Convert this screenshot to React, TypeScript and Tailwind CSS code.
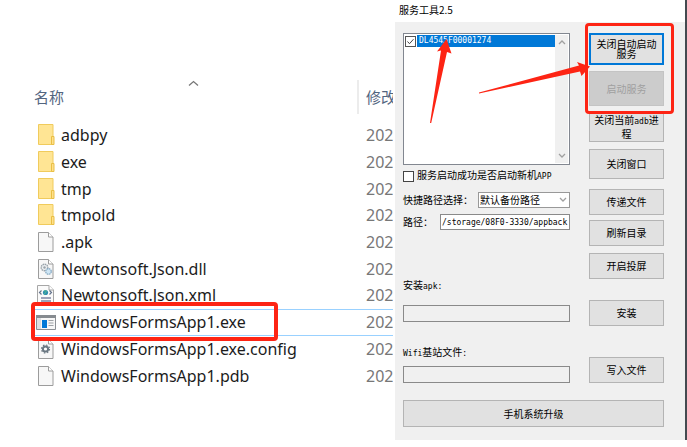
import React from "react";

type IconKind = "folder" | "page" | "dll" | "xml" | "app" | "config";

const files: { name: string; kind: IconKind; selected?: boolean }[] = [
  { name: "adbpy", kind: "folder" },
  { name: "exe", kind: "folder" },
  { name: "tmp", kind: "folder" },
  { name: "tmpold", kind: "folder" },
  { name: ".apk", kind: "page" },
  { name: "Newtonsoft.Json.dll", kind: "dll" },
  { name: "Newtonsoft.Json.xml", kind: "xml" },
  { name: "WindowsFormsApp1.exe", kind: "app", selected: true },
  { name: "WindowsFormsApp1.exe.config", kind: "config" },
  { name: "WindowsFormsApp1.pdb", kind: "page" },
];

function Page({ children }: { children?: React.ReactNode }) {
  return (
    <>
      <path d="M2.5 1.5h10l4.500 4.500v14.500h-14.500z" fill="#f7f7f7" stroke="#9c9c9c" />
      <path d="M12.500 1.500v4.500h4.500" fill="#fff" stroke="#9c9c9c" />
      {children}
    </>
  );
}

function FileIcon({ kind }: { kind: IconKind }) {
  return (
    <svg width="20" height="22" viewBox="0 0 20 22" className="shrink-0" aria-hidden="true">
      {kind === "folder" && (
        <>
          <path d="M2.5 .5h14.500v20h-14.500z" fill="#ffe594" stroke="#f0cb5c" />
          <path d="M15.500 12.500h2.500v8h-2.500z" fill="#ffe08a" stroke="#e9bf45" />
        </>
      )}
      {kind === "page" && <Page />}
      {kind === "dll" && (
        <Page>
          <circle cx="8.5" cy="9.5" r="3.3" fill="#eceff1" stroke="#9aa3aa" strokeWidth="1.4" strokeDasharray="1.6 0.6" />
          <circle cx="8.5" cy="9.5" r="1.2" fill="#9aa3aa" />
          <circle cx="12.500" cy="13.500" r="2.800" fill="#cfe6f5" stroke="#86a9c2" strokeWidth="1.2" strokeDasharray="1.6 0.6" />
        </Page>
      )}
      {kind === "xml" && (
        <>
          <path d="M1.500 1.500h11.500l4.500 4.500v14.500h-16z" fill="#fafafa" stroke="#a6a6a6" />
          <path d="M13 1.500v4.500h4.500" fill="#fff" stroke="#a6a6a6" />
          <path d="M5.500 6.500L3.500 8.500l2 2M13.500 6.500l2 2-2 2" fill="none" stroke="#66748c" strokeWidth="1.200" />
          <circle cx="9.500" cy="8.500" r="2.600" fill="#2e8fb0" />
          <path d="M8 7c2-1 3 .5 1.500 1.500S9 10.500 8.500 10.500" fill="none" stroke="#5dc48b" />
          <path d="M5 14h10M5 17h10" stroke="#7f86a5" strokeWidth="1.300" />
        </>
      )}
      {kind === "app" && (
        <>
          <path d="M.5 4.500h19v14H.5z" fill="#f7f7f7" stroke="#8b8f94" />
          <path d="M0 4h20v3H0z" fill="#868b90" />
          <path d="M1 7h4v11H1z" fill="#dcdfe2" />
          <path d="M6 9h5v8H6z" fill="#0078d7" />
          <path d="M12.500 9.500h5M12.500 12h5M12.500 14.500h5" stroke="#9da1a5" />
        </>
      )}
      {kind === "config" && (
        <Page>
          <circle cx="9.500" cy="11" r="2.600" fill="#fff" stroke="#6b7882" strokeWidth="2" />
          <circle cx="9.500" cy="11" r="4" fill="none" stroke="#6b7882" strokeWidth="1.200" strokeDasharray="1.570 1.570" />
        </Page>
      )}
    </svg>
  );
}

function Chevron({ up = false }: { up?: boolean }) {
  return (
    <svg width="8" height="6" viewBox="0 0 8 6" aria-hidden="true">
      <path d={up ? "M1 5l3-3 3 3" : "M1 1l3 3 3-3"} fill="none" stroke="#a0a0a0" strokeWidth="1.3" />
    </svg>
  );
}

function Mono({ children }: { children: React.ReactNode }) {
  return <span className="font-['DejaVu_Sans_Mono',monospace] text-[8px]">{children}</span>;
}

const raised = "block w-full border border-[#b4b4b4] bg-[#e1e1e1] p-0 text-center";
const field =
  "block border border-[#8a8a8a] px-px font-['DejaVu_Sans_Mono',monospace] text-[8px] text-black outline-none";

function FileList() {
  return (
    <section className="min-w-0 flex-1 overflow-hidden pt-20 pr-0.5 pl-[31px]">
      <div className="relative">
        <table className="h-[309px] w-full table-fixed border-collapse font-['Noto_Sans','Noto_Sans_CJK_SC',sans-serif] text-[16px] leading-5">
          <thead className="text-[15px] text-[#53657f]">
            <tr className="h-[42px]">
              <th className="relative w-[326px] p-0 pb-2 pl-[3px] text-left font-normal">
                <svg className="absolute top-0 left-[157px]" width="11" height="7" viewBox="0 0 11 7" aria-hidden="true">
                  <path d="M1 5.500L5.500 1.500 10 5.500" fill="none" stroke="#777" strokeWidth="1.300" />
                </svg>
                名称
              </th>
              <th className="p-0 pb-2 text-left font-normal">
                <div className="flex h-[34px] items-center overflow-hidden border-l-2 border-[#ececec] pl-[7px] whitespace-nowrap">
                  修改
                </div>
              </th>
            </tr>
          </thead>
          <tbody>
            {files.map((file) => (
              <tr
                key={file.name}
                className={file.selected ? "*:shadow-[inset_0_1px_#99d1ff,inset_0_-1px_#99d1ff]" : ""}
              >
                <td className="p-0 pl-[5px]">
                  <div className="flex items-center gap-[5px] text-[#1c1c1c]">
                    <FileIcon kind={file.kind} />
                    <span className="whitespace-nowrap">{file.name}</span>
                  </div>
                </td>
                <td className="overflow-hidden p-0 pl-[9px] text-[#777]">202</td>
              </tr>
            ))}
          </tbody>
        </table>
        <div className="absolute top-[222px] left-0 h-[39px] w-[247px] rounded border-4 border-[#fd2414]" />
      </div>
    </section>
  );
}

function ServiceTool() {
  return (
    <section className="relative w-[290px] shrink-0 font-['Noto_Sans_CJK_SC',sans-serif] text-[10px] leading-3 text-black">
      <h1 className="h-[22px] pt-1 pl-1">服务工具2.5</h1>
      <div className="bg-[#f0f0f0] pt-[11px] pr-[21px] pb-[13px] pl-2">
        <div className="flex gap-[19px]">
          <div className="min-w-0 flex-1">
            <div className="flex h-[132px] border border-[#828790] bg-white p-px">
              <label className="flex h-3 min-w-0 flex-1 items-center gap-px">
                <span className="relative size-[11px] shrink-0">
                  <input type="checkbox" defaultChecked className="block size-[11px] appearance-none border border-[#555] bg-white" />
                  <svg className="pointer-events-none absolute inset-0" width="11" height="11" viewBox="0 0 11 11" aria-hidden="true">
                    <path d="M2.500 5.500l2 2.200 4-4.500" fill="none" stroke="#444" />
                  </svg>
                </span>
                <span className="flex h-full flex-1 items-center bg-[#0078d7] pl-0.5 text-white">
                  <Mono>DL4545F00001274</Mono>
                </span>
              </label>
              <div className="flex w-[13px] flex-col items-center justify-between bg-[#f0f0f0] py-1">
                <Chevron up />
                <Chevron />
              </div>
            </div>
            <label className="mt-[5px] flex h-3 items-center gap-[3px] whitespace-nowrap">
              <input type="checkbox" className="block size-[11px] shrink-0 appearance-none border border-[#444] bg-white" />
              <span>
                服务启动成功是否启动新机<Mono>APP</Mono>
              </span>
            </label>
            <div className="mt-[10px] flex h-4 items-center justify-between">
              <label htmlFor="quick">快捷路径选择：</label>
              <div className="relative w-[92px] shrink-0">
                <select id="quick" className="block h-4 w-full appearance-none border border-[#999] bg-white p-0 pl-px leading-3">
                  <option>默认备份路径</option>
                </select>
                <span className="pointer-events-none absolute top-[5px] right-[3px]">
                  <Chevron />
                </span>
              </div>
            </div>
            <div className="mt-[6px] flex h-4 items-center justify-between">
              <label htmlFor="path">路径：</label>
              <input id="path" className={`${field} h-4 w-[130px] bg-white`} defaultValue="/storage/08F0-3330/appback" />
            </div>
            <label htmlFor="apk" className="mt-[49px] block h-3">
              安装<Mono>apk:</Mono>
            </label>
            <input id="apk" className={`${field} mt-[14px] h-[17px] w-full`} />
            <label htmlFor="wifi" className="mt-6 block h-3">
              <Mono>Wifi</Mono>基站文件<Mono>:</Mono>
            </label>
            <input id="wifi" className={`${field} mt-2 h-[17px] w-full`} />
          </div>
          <div className="w-[75px] shrink-0">
            <button className="block h-8 w-full border-2 border-[#0078d7] bg-[#e1e1e1] px-1 text-center leading-[10px]">
              关闭自动启动服务
            </button>
            <button disabled className="mt-[6px] block h-[35px] w-full border border-[#c4c4c4] bg-[#cccccc] text-center text-[#a0a0a0]">
              启动服务
            </button>
            <button className={`${raised} mt-[6px] h-[30px]`}>
              关闭当前<Mono>adb</Mono>进
              <br />程
            </button>
            <button className={`${raised} mt-[7px] h-[30px]`}>关闭窗口</button>
            <button className={`${raised} mt-[10px] h-[26px]`}>传递文件</button>
            <button className={`${raised} mt-[5px] h-[26px]`}>刷新目录</button>
            <button className={`${raised} mt-[7px] h-[26px]`}>开启投屏</button>
            <button className={`${raised} mt-[21px] h-[26px]`}>安装</button>
            <button className={`${raised} mt-[31px] h-[26px]`}>写入文件</button>
          </div>
        </div>
        <button className={`${raised} mt-[17px] h-[27px]`}>手机系统升级</button>
      </div>
      <div className="pointer-events-none absolute top-[23px] right-[11px] h-[91px] w-[89px] rounded border-[3px] border-[#fd2414]" />
      <svg className="pointer-events-none absolute top-[36px] right-[92px]" width="170" height="90" viewBox="423 36 170 90" aria-hidden="true">
        <path d="M446.500 39L437 51.500l4-1L430 123h1.200L447 52l4.500 1.500z" fill="#fd2414" />
        <path d="M590 66.500L577 62l2 3.500L479 92.500v1l101-22 1.500 4.500z" fill="#fd2414" />
      </svg>
    </section>
  );
}

export default function App() {
  return (
    <main className="flex min-h-screen items-start bg-white">
      <FileList />
      <ServiceTool />
      <div className="h-[440px] w-0.5 shrink-0 bg-[#444a50]" />
    </main>
  );
}
